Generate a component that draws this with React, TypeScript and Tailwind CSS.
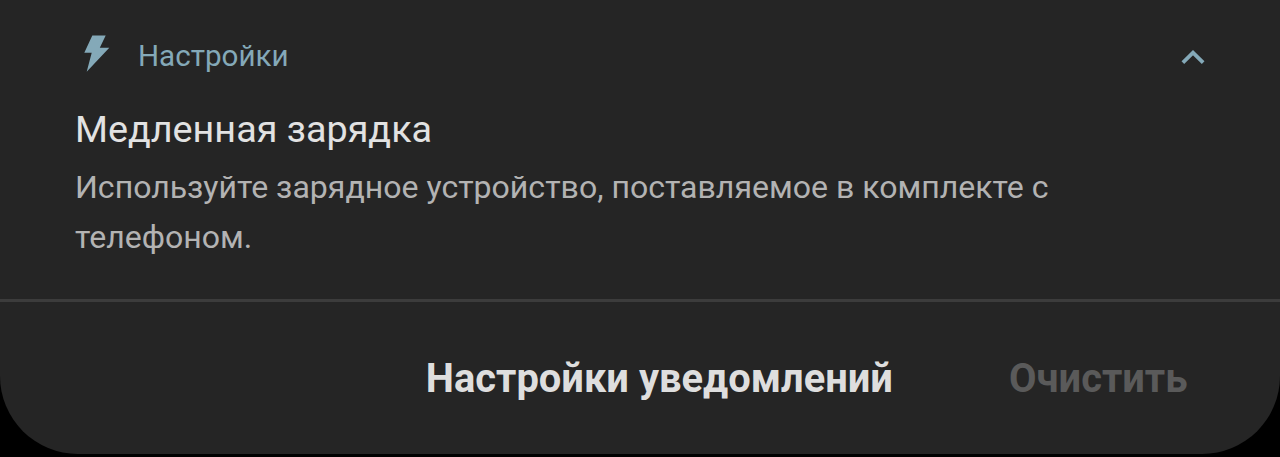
export default function App() {
  return (
    <main className="h-[457px] w-[1280px] overflow-hidden bg-black font-['Roboto',sans-serif]">
      <section className="flex h-[454px] flex-col rounded-b-[78px] bg-[#252525]">
        <div className="h-[299px] px-[75px] pt-[35px]">
          <header className="flex h-[42px] items-center text-[#84a9b8]">
            <svg className="ml-[9px] h-[38px] w-[26px] self-start" viewBox="0 0 26 38" fill="currentColor">
              <path d="M8.3 .6H21.7L15.8 12.8H25.3L2.7 36.8L7.7 17.8H.3Z" />
            </svg>
            <span className="ml-[28px] text-[29.6px] leading-[42px]">Настройки</span>
            <svg className="ml-auto mt-px h-[16px] w-[24px]" viewBox="0 0 24 16" fill="none" stroke="currentColor" strokeWidth="3.8" strokeLinecap="square">
              <path d="M3.2 12.3L12 3.7L20.8 12.3" />
            </svg>
          </header>
          <h1 className="mt-[26px] text-[37.75px] leading-[52px] text-[#e2e2e2]">Медленная зарядка</h1>
          <p className="mt-[7px] w-[1000px] text-[32.06px] leading-[50px] text-[#b3b3b3]">
            Используйте зарядное устройство, поставляемое в комплекте с телефоном.
          </p>
        </div>
        <footer className="flex flex-1 items-center justify-end border-t-[3px] border-[#3c3c3c] pr-[92.5px] pt-px text-[39.9px] font-bold">
          <button className="mr-[116px] text-[#dedede]">Настройки уведомлений</button>
          <button className="text-[#5a5a5a]">Очистить</button>
        </footer>
      </section>
    </main>
  );
}
